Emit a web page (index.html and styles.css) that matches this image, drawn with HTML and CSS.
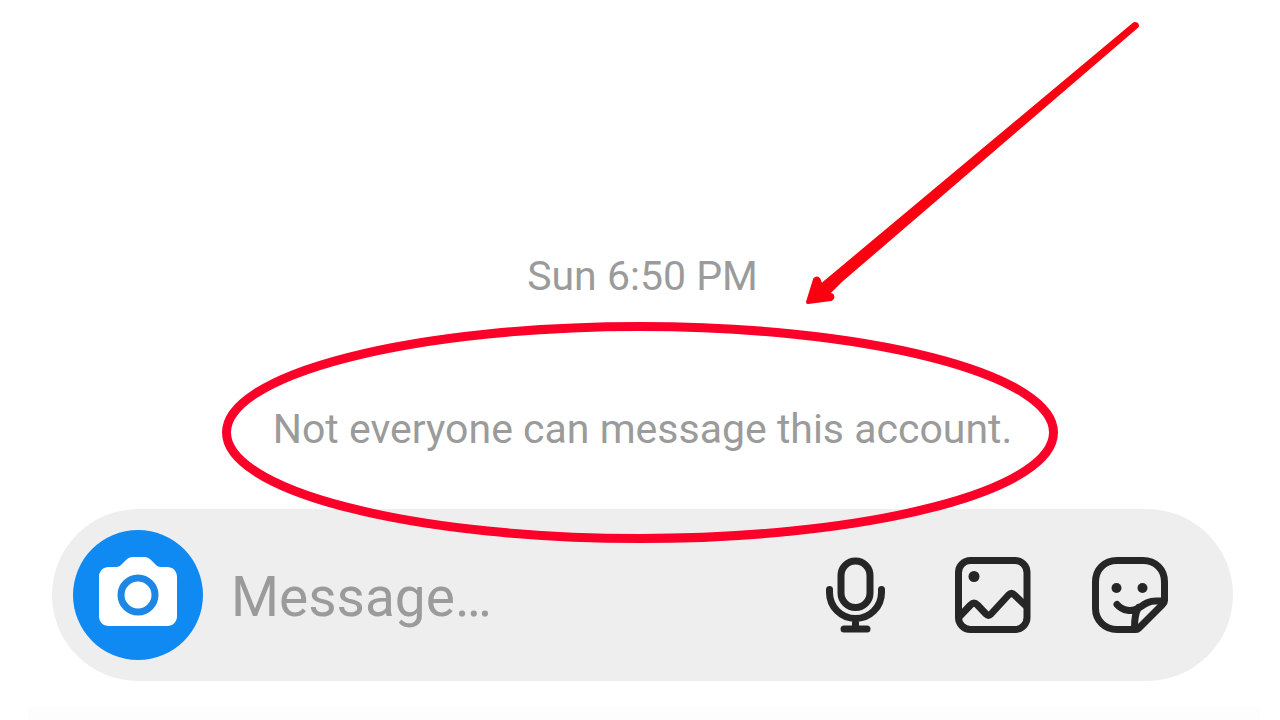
FILE: index.html
```html
<!DOCTYPE html>
<html lang="en">
<head>
    <meta charset="UTF-8">
    <meta name="viewport" content="width=device-width, initial-scale=1.0">
    <title>Messages</title>
    <link rel="stylesheet" href="styles.css">
</head>
<body>
    <main class="chat">
        <div class="thread">
            <time class="thread-text">Sun 6:50 PM</time>
            <p class="thread-text">Not everyone can message this account.</p>
        </div>

        <form class="composer">
            <button type="button" class="camera-button" aria-label="Camera">
                <svg viewBox="0 0 130 130">
                    <path fill="#fff" d="M36 37h7c3 0 4-1 6-3l4-4c2-2 4-3 7-3h11c3 0 5 1 7 3l4 4c2 2 3 3 6 3h6c6 0 10 4 10 10v39c0 6-4 10-10 10H36c-6 0-10-4-10-10V47c0-6 4-10 10-10z"/>
                    <circle cx="65" cy="65" r="17" fill="none" stroke="#1c87e5" stroke-width="7"/>
                </svg>
            </button>
            <input type="text" class="message-input" placeholder="Message…" aria-label="Message">
            <div class="actions">
                <button type="button" class="icon-button" aria-label="Voice message">
                    <svg viewBox="0 0 76 76">
                        <rect x="23" y="4" width="29" height="46.5" rx="14.5"/>
                        <path d="M11.5 32.5v3a26 26 0 0 0 52 0v-3M37.5 62v10M26 72h23"/>
                    </svg>
                </button>
                <button type="button" class="icon-button" aria-label="Photo">
                    <svg viewBox="0 0 76 76">
                        <rect x="3.5" y="3.5" width="68.5" height="69" rx="12"/>
                        <path d="M5 59l10.5-11q3.500-3.500 7 0L31 57q2.500 2.500 5 0l17.500-19q3-3 6 0L71 49"/>
                        <circle class="dot" cx="19" cy="19.5" r="5.5"/>
                    </svg>
                </button>
                <button type="button" class="icon-button" aria-label="Sticker">
                    <svg viewBox="0 0 76 76">
                        <path d="M44 72.5H25c-12 0-21.5-9-21.5-21V25C3.5 12.5 12.5 3.5 25 3.5h26c12.5 0 21.5 9 21.5 21.5v18.500q0 2-2 4L47 71q-1.500 1.500-3 1.500z"/>
                        <path d="M25 47.500c6 7 15 7 21 4 6-4 10-7.500 18-7.500h7M46.500 50.500C43 56 42.500 62 42.500 71"/>
                        <circle class="dot" cx="24.5" cy="31" r="5"/>
                        <circle class="dot" cx="50.5" cy="31" r="5"/>
                    </svg>
                </button>
            </div>
        </form>
    </main>
    <div class="bottom-strip"></div>

    <!-- hand drawn marks over the chat -->
    <svg class="marks" viewBox="0 0 1280 720" aria-hidden="true">
        <ellipse cx="640" cy="432.5" rx="413.5" ry="106" fill="none" stroke="#fb0029" stroke-width="9"/>
        <path fill="#fa0010" stroke="#fa0010" stroke-width="4" stroke-linejoin="round" d="M1134.500 24L821 286l-2.500-6.500q-1.500-2-3.500 0L808 302l23-3q2-1 1-3.500l-5-1.500 13-13L1137 26q0-2-2.500-2z"/>
    </svg>
</body>
</html>
```

FILE: styles.css
```css
* {
    box-sizing: border-box;
}
body {
    margin: 0;
    min-height: 100vh;
    display: flex;
    flex-direction: column;
    justify-content: flex-end;
    position: relative;
    background: #fff;
    font-family: Roboto, Arial, sans-serif;
}
.chat {
    padding: 0 47px 25px 52px;
}
.thread {
    display: flex;
    flex-direction: column;
    align-items: center;
    gap: 105px;
    margin-bottom: 56px;
}
.thread-text {
    margin: 0;
    font-size: 41px;
    line-height: 48px;
    color: #9b9b9b;
}
.composer {
    display: flex;
    align-items: center;
    padding: 21px 65px 21px 21px;
    border-radius: 86px;
    background: #eee;
}
button {
    padding: 0;
    border: none;
    background: none;
    cursor: pointer;
}
button svg {
    display: block;
    width: 100%;
}
.camera-button {
    flex: none;
    width: 130px;
    height: 130px;
    border-radius: 50%;
    background: #0f8af2;
}
.message-input {
    flex: 1;
    min-width: 0;
    margin: 0 25px 0 28px;
    padding: 4px 0 0;
    border: none;
    outline: none;
    background: none;
    font-family: inherit;
    font-size: 55px;
    line-height: 64px;
    color: #262626;
}
.message-input::placeholder {
    color: #9b9b9b;
    opacity: 1;
}
.actions {
    display: flex;
    gap: 61px;
}
.icon-button {
    width: 76px;
    height: 76px;
}
.icon-button svg {
    fill: none;
    stroke: #262626;
    stroke-width: 7;
    stroke-linecap: round;
    stroke-linejoin: round;
}
.icon-button .dot {
    fill: #262626;
    stroke: none;
}
.bottom-strip {
    height: 14px;
    margin: 0 20px 0 28px;
    background: #fdfdfd;
}
.marks {
    position: absolute;
    left: 0;
    bottom: 0;
    width: 100%;
    pointer-events: none;
}
```
